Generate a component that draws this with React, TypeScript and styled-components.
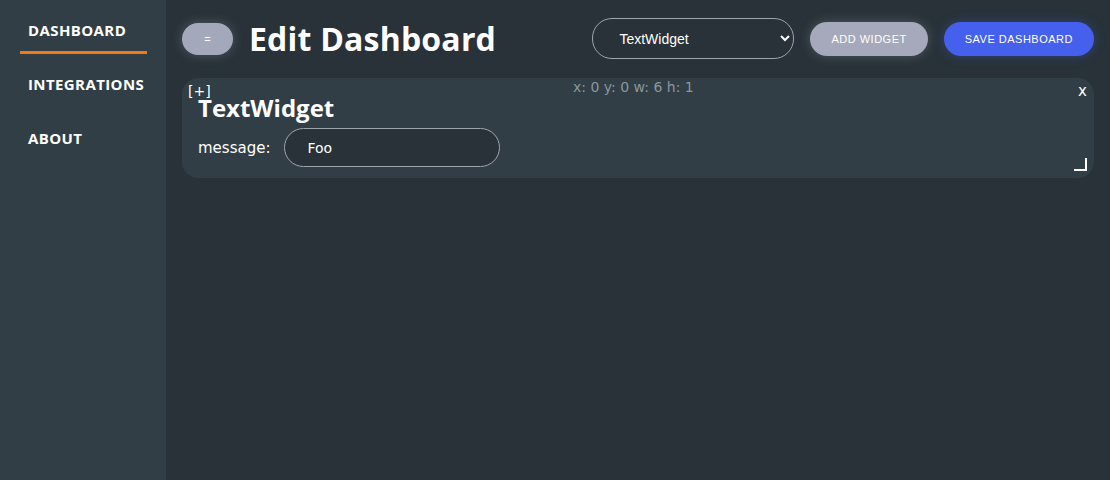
import React from "react";
import styled, { createGlobalStyle } from "styled-components";

const Global = createGlobalStyle`
  html, body { margin: 0; padding: 0; background: #283238; }
  body { font-family: "Open Sans", "Liberation Sans", sans-serif; color: #fff; }
  * { box-sizing: border-box; }
`;

const Shell = styled.div`
  display: flex;
  height: 480px;
  background: #283238;
`;

const Sidebar = styled.nav`
  width: 166px;
  flex: none;
  background: #313e45;
  display: flex;
  flex-direction: column;
  padding: 18px 19px 0 20px;
`;

const NavItem = styled.a<{ $active?: boolean }>`
  display: block;
  font-family: "Open Sans", sans-serif;
  font-weight: 700;
  font-size: 15px;
  letter-spacing: 0.4px;
  color: #fff;
  padding: 0 0 0 8px;
  height: 36px;
  line-height: 24px;
  border-bottom: 3px solid ${(p) => (p.$active ? "#f07a1a" : "transparent")};
  margin-bottom: 18px;
`;

const Main = styled.main`
  flex: 1;
  display: flex;
  flex-direction: column;
  padding: 18px 16px 0 16px;
`;

const Header = styled.header`
  display: flex;
  align-items: center;
  height: 41px;
`;

const Toggle = styled.button`
  width: 51px;
  height: 32px;
  border: none;
  border-radius: 16px;
  background: #a4a8bb;
  color: #fff;
  font-size: 11px;
  box-shadow: 0 0 12px rgba(200, 205, 220, 0.25);
  margin-right: 16px;
  font-family: "Liberation Sans", sans-serif;
`;

const Title = styled.h1`
  margin: 0;
  font-family: "Open Sans", sans-serif;
  font-weight: 700;
  font-size: 32px;
  letter-spacing: 0.2px;
  line-height: 41px;
  flex: 1;
`;

const Select = styled.select`
  width: 202px;
  height: 41px;
  border: 1px solid #a0a4b0;
  border-radius: 20px;
  background: #283238;
  color: #fff;
  font-family: "Liberation Sans", Arial, sans-serif;
  font-size: 14px;
  padding: 0 10px 0 22px;
  margin-right: 16px;
  outline: none;
`;

const ActionButton = styled.button<{ $primary?: boolean }>`
  height: 34px;
  border: none;
  border-radius: 17px;
  padding: 0 21px;
  font-family: "Liberation Sans", Arial, sans-serif;
  font-size: 11px;
  letter-spacing: 0.5px;
  color: #fff;
  background: ${(p) => (p.$primary ? "#4560ec" : "#a5a9bb")};
  box-shadow: 0 0 12px
    ${(p) => (p.$primary ? "rgba(69, 96, 236, 0.35)" : "rgba(200, 205, 220, 0.25)")};
  & + & { margin-left: 16px; }
`;

const Card = styled.section`
  position: relative;
  margin-top: 19px;
  height: 100px;
  border-radius: 16px;
  background: #313e45;
  padding: 16px 16px 0 16px;
`;

const Expand = styled.span`
  position: absolute;
  left: 6px;
  top: 5px;
  font-family: "DejaVu Sans", sans-serif;
  font-size: 14px;
  color: #fff;
`;

const Coords = styled.span`
  position: absolute;
  left: 391px;
  top: 1px;
  font-family: "DejaVu Sans", sans-serif;
  font-size: 14px;
  color: #8c969c;
`;

const Close = styled.span`
  position: absolute;
  right: 7px;
  top: 4px;
  font-family: "DejaVu Sans", sans-serif;
  font-size: 15px;
  color: #fff;
`;

const Resize = styled.span`
  position: absolute;
  right: 7px;
  bottom: 7px;
  width: 13px;
  height: 13px;
  border-right: 2px solid #fff;
  border-bottom: 2px solid #fff;
`;

const WidgetTitle = styled.h2`
  margin: 0;
  font-family: "Open Sans", sans-serif;
  font-weight: 700;
  font-size: 24px;
  line-height: 28px;
`;

const Field = styled.div`
  display: flex;
  align-items: center;
  margin-top: 6px;
`;

const Label = styled.label`
  font-family: "DejaVu Sans", sans-serif;
  font-size: 15px;
  color: #fff;
  margin-right: 14px;
`;

const Input = styled.input`
  width: 216px;
  height: 39px;
  border: 1px solid #a0a4b0;
  border-radius: 20px;
  background: #283238;
  color: #fff;
  font-family: "DejaVu Sans", sans-serif;
  font-size: 14px;
  padding: 0 22px;
  outline: none;
`;

export default function App() {
  return (
    <>
      <Global />
      <Shell>
        <Sidebar>
          <NavItem $active>DASHBOARD</NavItem>
          <NavItem>INTEGRATIONS</NavItem>
          <NavItem>ABOUT</NavItem>
        </Sidebar>
        <Main>
          <Header>
            <Toggle>=</Toggle>
            <Title>Edit Dashboard</Title>
            <Select defaultValue="TextWidget">
              <option>TextWidget</option>
            </Select>
            <ActionButton>ADD WIDGET</ActionButton>
            <ActionButton $primary>SAVE DASHBOARD</ActionButton>
          </Header>
          <Card>
            <Expand>[+]</Expand>
            <Coords>x: 0 y: 0 w: 6 h: 1</Coords>
            <Close>x</Close>
            <Resize />
            <WidgetTitle>TextWidget</WidgetTitle>
            <Field>
              <Label>message:</Label>
              <Input defaultValue="Foo" />
            </Field>
          </Card>
        </Main>
      </Shell>
    </>
  );
}
